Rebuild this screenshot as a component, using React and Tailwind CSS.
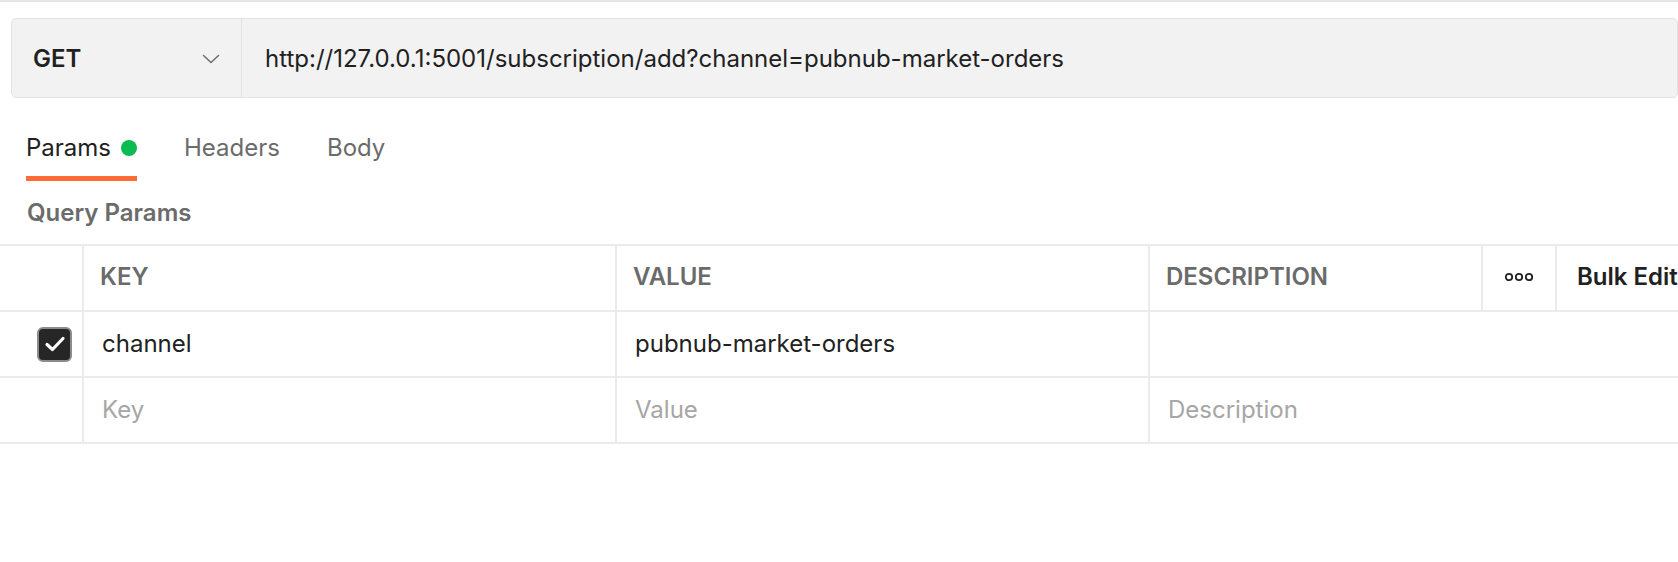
import React from "react";

const columns = [
  { key: "KEY", width: "w-[533px]" },
  { key: "VALUE", width: "w-[533px]" },
  { key: "DESCRIPTION", width: "w-[333px]" },
];

const Chevron = () => (
  <svg width="18" height="10" viewBox="0 0 18 10" fill="none">
    <path d="M1.5 1.5 L9 8.5 L16.5 1.5" stroke="#707070" strokeWidth="1.6" strokeLinecap="round" strokeLinejoin="round" />
  </svg>
);

const Dots = () => (
  <svg width="28" height="10" viewBox="0 0 28 10" fill="none">
    <circle cx="4" cy="5" r="3.2" stroke="#212121" strokeWidth="1.8" />
    <circle cx="14" cy="5" r="3.2" stroke="#212121" strokeWidth="1.8" />
    <circle cx="24" cy="5" r="3.2" stroke="#212121" strokeWidth="1.8" />
  </svg>
);

const Checkbox = () => (
  <div className="w-[35px] h-[35px] rounded-[6px] bg-[#262626] border-2 border-[#8c8c8c] flex items-center justify-center">
    <svg width="22" height="18" viewBox="0 0 22 18" fill="none">
      <path d="M3 9.5 L8.5 14.5 L19 3.5" stroke="#ffffff" strokeWidth="3.2" strokeLinecap="round" strokeLinejoin="round" />
    </svg>
  </div>
);

export default function App() {
  return (
    <div className="w-full min-h-screen bg-white border-t-2 border-[#e6e6e6] text-[#212121] font-['Inter','Noto_Sans',sans-serif] overflow-hidden">
      {/* Request bar */}
      <div className="pt-[16px] pl-[11px]">
        <div className="flex h-[80px] bg-[#f2f2f2] border border-[#e3e3e3] rounded-[5px]">
          <div className="w-[230px] flex items-center justify-between pl-[21px] pr-[21px] pt-[2px] border-r border-[#e3e3e3]">
            <span className="text-[24px] font-semibold">GET</span>
            <Chevron />
          </div>
          <div className="flex items-center pl-[23px] pt-[2px] text-[24px] text-[#212121] whitespace-nowrap">
            http://127.0.0.1:5001/subscription/add?channel=pubnub-market-orders
          </div>
        </div>
      </div>

      {/* Tabs */}
      <div className="flex items-end gap-[47px] pl-[26px] mt-[30px] text-[24px]">
        <div className="flex flex-col">
          <div className="flex items-center gap-[10px] h-[40px]">
            <span className="text-[#212121]">Params</span>
            <span className="w-[16px] h-[16px] rounded-full bg-[#0cbb52]" />
          </div>
          <div className="h-[5px] mt-[8px] bg-[#ff6c37]" />
        </div>
        <div className="flex items-center h-[40px] mb-[13px] text-[#6b6b6b]">Headers</div>
        <div className="flex items-center h-[40px] mb-[13px] text-[#6b6b6b]">Body</div>
      </div>

      <div className="pl-[27px] mt-[18px] text-[24px] font-semibold text-[#6b6b6b] h-[28px] flex items-center">
        Query Params
      </div>

      {/* Params table */}
      <div className="mt-[17px] border-t-2 border-[#ebebeb] text-[24px]">
        <div className="flex h-[66px] pb-[3px] border-b-2 border-[#ebebeb]">
          <div className="w-[84px] shrink-0 border-r-2 border-[#ebebeb] -mb-[3px]" />
          {columns.map((c) => (
            <div key={c.key} className={`${c.width} shrink-0 border-r-2 border-[#ebebeb] -mb-[3px] pb-[3px] flex items-center pl-[16px] font-semibold text-[#6b6b6b]`}>
              {c.key}
            </div>
          ))}
          <div className="w-[74px] shrink-0 border-r-2 border-[#ebebeb] -mb-[3px] pb-[3px] flex items-center justify-center">
            <Dots />
          </div>
          <div className="flex items-center pl-[20px] font-semibold whitespace-nowrap">Bulk Edit</div>
        </div>

        <div className="flex h-[66px] border-b-2 border-[#ebebeb]">
          <div className="w-[84px] shrink-0 border-r-2 border-[#ebebeb] flex items-center justify-end pr-[10px]">
            <Checkbox />
          </div>
          <div className="w-[533px] shrink-0 border-r-2 border-[#ebebeb] flex items-center pl-[18px] pb-[1px]">channel</div>
          <div className="w-[533px] shrink-0 border-r-2 border-[#ebebeb] flex items-center pl-[18px] pb-[1px]">pubnub-market-orders</div>
          <div className="flex-1" />
        </div>

        <div className="flex h-[66px] border-b-2 border-[#ebebeb] text-[#a6a6a6]">
          <div className="w-[84px] shrink-0 border-r-2 border-[#ebebeb]" />
          <div className="w-[533px] shrink-0 border-r-2 border-[#ebebeb] flex items-center pl-[18px] pb-[1px]">Key</div>
          <div className="w-[533px] shrink-0 border-r-2 border-[#ebebeb] flex items-center pl-[18px] pb-[1px]">Value</div>
          <div className="flex-1 flex items-center pl-[18px] pb-[1px]">Description</div>
        </div>
      </div>
    </div>
  );
}
